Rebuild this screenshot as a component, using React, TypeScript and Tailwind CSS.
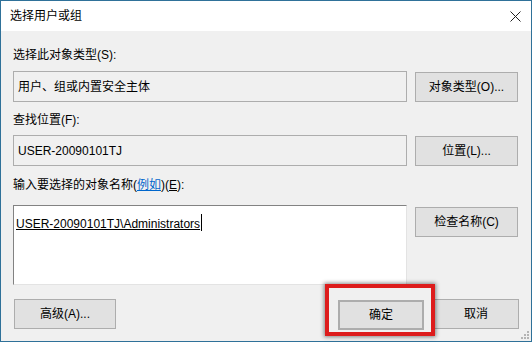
const font = { fontFamily: '"Liberation Sans", "Noto Sans CJK SC", sans-serif' };

function Btn({ children, className = "" }: { children: React.ReactNode; className?: string }) {
  return (
    <div
      className={
        "flex h-[30px] items-center justify-center border border-[#adadad] bg-[#e1e1e1] text-[12px] text-black " +
        className
      }
    >
      {children}
    </div>
  );
}

function Grip() {
  const dots = [
    [6, 0],
    [3, 3],
    [6, 3],
    [0, 6],
    [3, 6],
    [6, 6],
  ];
  return (
    <svg className="absolute bottom-[2px] right-[2px]" width="8" height="8" viewBox="0 0 8 8">
      {dots.map(([x, y], i) => (
        <rect key={i} x={x} y={y} width="2" height="2" fill="#b4b4b4" />
      ))}
    </svg>
  );
}

export default function App() {
  return (
    <div
      className="relative flex h-[342px] w-[532px] flex-col border border-[#2f7199] bg-[#f0f0f0] text-black"
      style={font}
    >
      {/* title bar */}
      <div className="flex h-[30px] shrink-0 items-center justify-between bg-white pl-[9px] pr-[10px]">
        <span className="text-[12px] leading-none">选择用户或组</span>
        <svg width="11" height="11" viewBox="0 0 11 11">
          <path d="M0.5 0.5 L10.5 10.5 M10.5 0.5 L0.5 10.5" stroke="#222" strokeWidth="1" />
        </svg>
      </div>

      {/* body */}
      <div className="flex flex-1 flex-col px-[12px] pt-[16px] text-[12px] leading-[16px]">
        <div>选择此对象类型(S):</div>
        <div className="mt-[8px] flex items-start gap-[8px]">
          <div className="flex h-[31px] w-[394px] items-center border border-[#adadad] px-[4px]">
            用户、组或内置安全主体
          </div>
          <Btn className="mt-[1px] w-[103px]">对象类型(O)...</Btn>
        </div>

        <div className="mt-[10px]">查找位置(F):</div>
        <div className="mt-[7px] flex items-start gap-[8px]">
          <div className="flex h-[31px] w-[394px] items-center border border-[#adadad] px-[4px]">
            USER-20090101TJ
          </div>
          <Btn className="mt-[1px] w-[103px]">位置(L)...</Btn>
        </div>

        <div className="mt-[11px]">
          输入要选择的对象名称(
          <span className="text-[#0066cc] underline">例如</span>)(<span className="underline">E</span>):
        </div>
        <div className="mt-[12px] flex items-start gap-[8px]">
          <div className="h-[80px] w-[394px] border border-b-[#e3e3e3] border-l-[#828282] border-r-[#e3e3e3] border-t-[#828282] bg-white px-[2px] pt-[5px]">
            <span className="underline">USER-20090101TJ\Administrators</span>
            <span className="ml-[1px] inline-block h-[17px] w-[1px] translate-y-[3px] bg-black" />
          </div>
          <Btn className="mt-[2px] w-[103px]">检查名称(C)</Btn>
        </div>

        <div className="mt-[14px] flex items-start">
          <Btn className="ml-[1px] w-[102px]">高级(A)...</Btn>
          <div className="flex-1" />
          <Btn className="mt-[1px] h-[29px] w-[86px] border-2 border-[#0078d7]">确定</Btn>
          <Btn className="ml-[9px] w-[86px]">取消</Btn>
        </div>
      </div>

      {/* highlight */}
      <div className="absolute left-[324px] top-[283px] h-[52px] w-[110px] border-[4px] border-[#dd1c1c] shadow-[0_0_4px_1px_rgba(0,0,0,0.45)]" />
      <Grip />
    </div>
  );
}
